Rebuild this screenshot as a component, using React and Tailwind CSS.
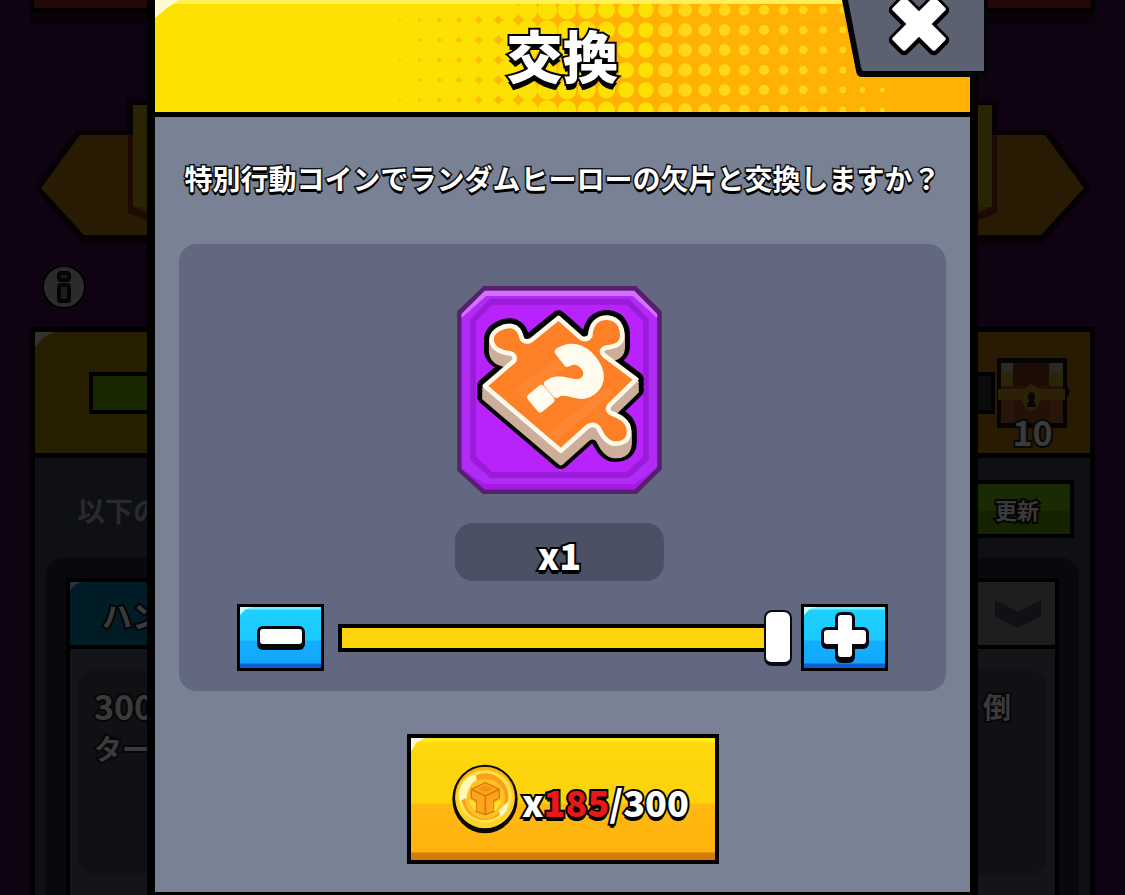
import React, { useState } from 'react';

const HEADER_ROWS = [10, 30, 50, 70, 90, 110];
const HEADER_COLS = Array.from({ length: 27 }, (_, i) => i);

const PIECE =
  'M355 142 L420 200 Q438 212 450 196 C452 160 472 140 503 141 C540 144 552 180 544 208 C536 228 512 228 494 232 Q478 240 492 254 L588 326 L510 402 Q498 414 510 426 C535 436 566 448 567 482 C566 514 542 522 516 518 C494 510 484 490 474 470 Q460 456 442 468 L362 540 L134 346 L222 270 Q228 254 210 248 C176 244 154 230 154 204 C156 180 190 164 214 166 C236 170 240 186 246 206 Q258 218 274 208 Z';

function Glint({ className }) {
  return <span aria-hidden="true" className={`absolute left-0 top-0 [clip-path:polygon(0_0,100%_0,45%_30%,0_100%)] ${className}`} />;
}

function HeaderPattern() {
  return (
    <svg className="absolute inset-0 h-full w-full" viewBox="0 0 815 112" preserveAspectRatio="xMidYMid slice" aria-hidden="true">
      <defs>
        <linearGradient id="header-base">
          <stop offset="0.26" stopColor="#f8cc04" />
          <stop offset="0.5" stopColor="#ffb204" />
        </linearGradient>
      </defs>
      <rect width="815" height="112" fill="url(#header-base)" />
      <rect width="216" height="112" fill="#fde102" />
      {HEADER_COLS.map((i) => {
        const cx = 215 + i * 19.7;
        const r = 13.7 - i * 0.43;
        return HEADER_ROWS.map((y) => <circle key={`${i}-${y}`} cx={cx} cy={y} r={r} fill={i > 14 ? '#ffd716' : '#fde102'} />);
      })}
      <rect width="815" height="4" fill="#fff05a" />
      <path d="M0 0 H24 L12 8 L0 18 Z" fill="#fffbd0" />
    </svg>
  );
}

function PuzzleTile() {
  return (
    <svg className="h-[210px] w-[207px]" viewBox="48 43 620 630" role="img" aria-label="ランダムヒーローの欠片">
      <path d="M130 46 H588 L665 122 V596 L590 670 H128 L51 600 V122 Z" fill="#57206f" />
      <path d="M134 60 H582 L651 130 V590 L584 656 H134 L64 594 V130 Z" fill="#b12af5" />
      <path d="M134 60 H582 L651 130 V142 L578 76 H138 L64 142 V130 Z" fill="#d56ffc" />
      <path d="M64 594 L134 640 H584 L651 590 L584 656 H134 Z" fill="#a41be6" />
      <path d="M150 84 H566 L626 146 V568 L566 622 H150 L90 568 V146 Z" fill="#9a1bd8" />
      <path d="M156 102 H560 L609 152 V558 L560 604 H156 L107 558 V152 Z" fill="#b822fb" />
      <g stroke="#000" strokeWidth="46" strokeLinejoin="round">
        <path d={PIECE} />
        <path d={PIECE} transform="translate(0 16)" />
        <path d={PIECE} transform="translate(0 32)" />
      </g>
      <g fill="#cdae9b" stroke="#cdae9b" strokeWidth="16" strokeLinejoin="round">
        <path d={PIECE} transform="translate(0 36)" />
        <path d={PIECE} transform="translate(0 28)" />
        <path d={PIECE} transform="translate(0 20)" />
        <path d={PIECE} transform="translate(0 10)" />
      </g>
      <path d={PIECE} fill="#fd7f26" stroke="#fff9ea" strokeWidth="14" strokeLinejoin="round" />
      <path d="M222 356 L406 222 L436 246 L250 388 Z" fill="#ff9040" opacity="0.4" />
      <path d="M320 490 L500 350 L520 366 L346 510 Z" fill="#ff9040" opacity="0.5" />
      <text
        x="372"
        y="440"
        textAnchor="middle"
        transform="rotate(50 372 334)"
        fill="#fffbef"
        stroke="#fffbef"
        strokeWidth="22"
        strokeLinejoin="round"
        className="font-['Liberation_Sans',sans-serif] text-[310px] font-bold"
      >
        ?
      </text>
    </svg>
  );
}

function Coin() {
  return (
    <svg className="h-[70px] w-[66px] shrink-0" viewBox="184 138 198 210" aria-hidden="true">
      <ellipse cx="283" cy="243" rx="98" ry="103" fill="#0b0905" />
      <ellipse cx="283" cy="238" rx="90" ry="92" fill="#f8b414" />
      <ellipse cx="283" cy="243" rx="88" ry="88" fill="#fdd02a" />
      <ellipse cx="283" cy="236" rx="80" ry="78" fill="#ffe44a" />
      <circle cx="283" cy="236" r="70" fill="#fb9d1d" />
      <circle cx="283" cy="242" r="60" fill="#ffc222" />
      <path d="M205 232 C206 200 226 176 256 170 L258 186 C240 196 230 216 228 240 L206 250 Z" fill="#fff9b5" />
      <path d="M354 248 C352 272 342 288 328 294 L326 276 Z" fill="#fffbd0" />
      <path d="M242 214 L284 194 L326 214 V240 L310 248 V280 L284 290 L256 280 V248 L242 240 Z" fill="#ffa51c" stroke="#d9780e" strokeWidth="4" strokeLinejoin="round" />
      <path d="M242 214 L284 234 L326 214 M284 234 V288" fill="none" stroke="#d9780e" strokeWidth="5" />
      <path d="M262 212 L284 202 L306 212 L284 222 Z" fill="#f58e16" />
      <path d="M236 246 L256 254 V280 Q240 268 236 246 M332 246 L310 254 V280 Q328 268 332 246" fill="#ffe22e" />
    </svg>
  );
}

function RibbonEnd({ className }) {
  return (
    <svg className={`h-[146px] w-[130px] ${className}`} viewBox="0 0 130 146" aria-hidden="true">
      <path d="M0 91 L42 33 H92 V2 H130 V146 H48 Z" fill="#050105" />
      <path d="M7 91 L46 38 H130 V138 H50 Z" fill="#271b04" />
      <path d="M94 38 H100 V110 L130 124 V130 L94 116 Z" fill="#1c0a03" />
      <path d="M99 8 H130 V110 H99 Z" fill="#2a2404" />
    </svg>
  );
}

function Chest() {
  return (
    <svg className="h-[70px] w-[75px]" viewBox="0 0 75 70" aria-hidden="true">
      <path d="M2 0 H72 V28 L75 34 L72 40 V70 H2 Z" fill="#050403" />
      <rect x="6" y="5" width="62" height="60" fill="#231006" />
      <path d="M18 5 H54 V28 H18 Z" fill="#1d0b05" />
      <path d="M6 5 H18 V28 H6 Z M54 5 H68 V28 H54 Z" fill="#2a2508" />
      <path d="M7 5 H18 V14 H7 Z M55 5 H67 V14 H55 Z" fill="#2a2a24" />
      <path d="M3 31 H28 L36 26 L44 31 H70 V42 H46 L42 50 L36 54 L30 50 L26 42 H3 Z" fill="#2b2106" />
      <path d="M36 34 a5 5 0 0 1 3 8 l2 7 h-9 l2 -7 a5 5 0 0 1 2 -8" fill="#080504" />
      <path d="M6 42 H20 V65 H6 Z M54 42 H68 V65 H54 Z" fill="#27150a" />
    </svg>
  );
}

// Dimmed mission screen behind the dialog
function MissionScreen() {
  return (
    <div className="flex h-full flex-col px-[30px] text-[#3a3a3a]">
      <div className="h-3 shrink-0 border-x-4 border-b-4 border-black bg-[#240805] shadow-[0_12px_0_#090209]" />
      <div className="mt-[85px] flex shrink-0 justify-between px-1">
        <RibbonEnd className="" />
        <RibbonEnd className="-scale-x-100" />
      </div>
      <button type="button" aria-label="情報" className="ml-3 mt-[22px] flex h-[44px] w-[44px] shrink-0 items-center justify-center rounded-full border-2 border-black bg-[#2b2b2b]">
        <svg viewBox="0 0 16 34" className="h-[34px] w-4" aria-hidden="true">
          <rect x="3" y="3" width="10" height="7" rx="2" fill="#1a1a1a" stroke="#050505" strokeWidth="4" />
          <rect x="3" y="15" width="10" height="16" rx="2" fill="#1d1d1d" stroke="#050505" strokeWidth="4" />
        </svg>
      </button>

      <section className="mt-[18px] flex flex-1 flex-col border-x-[5px] border-t-[5px] border-black bg-[#0e1013]">
        <div className="relative flex h-[126px] shrink-0 items-center border-b-[5px] border-black bg-linear-to-r from-[#271f02] to-[#291a02] pl-[54px] pr-5">
          <Glint className="h-4 w-5 bg-[#34322a]" />
          <div className="flex h-[42px] flex-1 border-4 border-black bg-[#0a0c0c]">
            <div className="w-3/4 bg-[#182602]" />
          </div>
          <div className="relative">
            <Chest />
            <span className="absolute inset-x-0 top-[60px] text-center text-[34px] leading-7 font-bold [-webkit-text-stroke:4px_#080808] [paint-order:stroke_fill]">10</span>
          </div>
        </div>

        <div className="flex items-start justify-between pl-[42px] pr-4 pt-[22px]">
          <p className="pt-3 text-[28px] leading-9 font-bold text-[#292a2b]">以下の</p>
          <button type="button" className="h-[58px] w-[190px] border-4 border-black bg-[linear-gradient(#1a2a02_55%,#152302_55%)] pl-[76px] text-[22px] font-bold">
            <span className="[-webkit-text-stroke:4px_#050505] [paint-order:stroke_fill]">更新</span>
          </button>
        </div>

        <div className="mx-[11px] mt-[20px] flex flex-1 flex-col rounded-t-[18px] bg-[#07090c] px-5 pt-5">
          <article className="flex flex-1 flex-col border-x-4 border-t-4 border-black bg-[#141518]">
            <div className="relative flex h-[67px] shrink-0 border-b-4 border-black bg-[#021c26]">
              <Glint className="h-2 w-3 bg-[#263338]" />
              <h2 className="flex-1 pl-8 pt-1 text-[30px] leading-[56px] font-bold [-webkit-text-stroke:4px_#050505] [paint-order:stroke_fill]">ハン</h2>
              <button type="button" aria-label="詳細を閉じる" className="flex w-[90px] items-center justify-center bg-[#1e1e1e] pl-4">
                <svg viewBox="0 0 46 28" className="h-7 w-[46px]" aria-hidden="true">
                  <path d="M0 0 L23 12 L46 0 V16 L23 28 L0 16 Z" fill="#0f1114" />
                </svg>
              </button>
            </div>
            <div className="mx-2 mb-5 mt-5 flex flex-1 justify-between rounded-[20px] bg-[#101114] pl-4 pr-9 pt-4 text-[28px] leading-[42px] font-bold [&_p]:[-webkit-text-stroke:4px_#070709] [&_p]:[paint-order:stroke_fill]">
              <p>
                <span className="block text-[34px]">300</span>
                ター
              </p>
              <p>倒</p>
            </div>
          </article>
        </div>
      </section>
    </div>
  );
}

const stepButton =
  'relative flex h-[67px] w-[87px] shrink-0 items-center justify-center border-[3px] border-black bg-[linear-gradient(#74f3ff_2px,#1fd0ff_3px,#1bc9ff_33px,#14aeff_34px,#12a8ff_56px,#0b5fd2_57px)]';

export default function App() {
  const [count, setCount] = useState(1);
  const [open, setOpen] = useState(true);

  return (
    <main className="relative h-screen overflow-hidden bg-[#0f0213] font-['Noto_Sans_CJK_JP',sans-serif]">
      <MissionScreen />

      {open && (
        <div className="absolute inset-0 flex justify-center">
          <div role="dialog" aria-labelledby="exchange-title" className="relative h-fit w-full max-w-[831px] border-x-8 border-b-8 border-black bg-[#798195]">
            <header className="relative flex h-[117px] justify-center border-b-[5px] border-black">
              <HeaderPattern />
              <h1 id="exchange-title" className="relative pt-3 text-[56px] leading-[84px] font-black text-white [-webkit-text-stroke:4px_#000] [paint-order:stroke_fill] [text-shadow:0_3px_0_#000,0_6px_0_#000]">
                交換
              </h1>
            </header>

            <button type="button" aria-label="閉じる" onClick={() => setOpen(false)} className="absolute -right-[18px] top-0">
              <svg viewBox="0 0 146 78" className="h-[78px] w-[146px]" aria-hidden="true">
                <path d="M0 0 H146 V77 H20 Q15 77 14 71 Z" fill="#040507" />
                <path d="M6 0 H142 V71 H21 Q20 71 19 67 Z" fill="#5b6170" />
                <g fill="#000" stroke="#000" strokeWidth="7" strokeLinejoin="round">
                  <rect x="47" y="16" width="60" height="18" rx="2" transform="rotate(45 77 25)" />
                  <rect x="47" y="16" width="60" height="18" rx="2" transform="rotate(-45 77 25)" />
                </g>
                <g fill="#fff">
                  <rect x="47" y="15" width="60" height="18" rx="2" transform="rotate(45 77 24)" />
                  <rect x="47" y="15" width="60" height="18" rx="2" transform="rotate(-45 77 24)" />
                </g>
              </svg>
            </button>

            <div className="flex flex-col items-center px-6 pb-7">
              <p className="mt-[41px] text-center text-[28px] leading-10 font-bold text-white [-webkit-text-stroke:3px_#111] [paint-order:stroke_fill] [text-shadow:0_3px_0_#000]">
                特別行動コインでランダムヒーローの欠片と交換しますか？
              </p>

              <section className="mt-[46px] flex w-full flex-col items-center rounded-[18px] bg-[#626880] px-[58px] pb-5 pt-[41px]">
                <div className="flex flex-col items-center pr-1.5">
                  <PuzzleTile />
                  <output htmlFor="exchange-count" className="mt-7 flex h-[58px] w-[209px] items-center justify-center rounded-[18px] bg-[#4b5064] pt-1 text-[36px] leading-10 font-black text-white [-webkit-text-stroke:4px_#000] [paint-order:stroke_fill] [text-shadow:0_4px_0_#000]">
                    x{count}
                  </output>
                </div>

                <div className="mt-[23px] flex w-full items-center">
                  <button type="button" aria-label="減らす" onClick={() => setCount(Math.max(0, count - 1))} className={stepButton}>
                    <Glint className="h-2 w-3 bg-[#c8fff5]" />
                    <svg viewBox="0 0 48 24" className="h-6 w-12" aria-hidden="true">
                      <rect width="48" height="24" rx="6" fill="#05070a" />
                      <rect x="3" y="3" width="42" height="15" rx="3" fill="#fff" />
                    </svg>
                  </button>
                  <input
                    id="exchange-count"
                    type="range"
                    aria-label="交換数"
                    min="0"
                    max="1"
                    value={count}
                    onChange={(e) => setCount(Number(e.target.value))}
                    className="ml-[14px] mr-[9px] h-14 min-w-0 flex-1 appearance-none bg-transparent [&::-webkit-slider-runnable-track]:h-7 [&::-webkit-slider-runnable-track]:bg-[#fdd40c] [&::-webkit-slider-runnable-track]:shadow-[inset_0_0_0_4px_#000] [&::-webkit-slider-thumb]:-mt-[14px] [&::-webkit-slider-thumb]:h-14 [&::-webkit-slider-thumb]:w-7 [&::-webkit-slider-thumb]:appearance-none [&::-webkit-slider-thumb]:rounded-[8px] [&::-webkit-slider-thumb]:border-2 [&::-webkit-slider-thumb]:border-b-4 [&::-webkit-slider-thumb]:border-[#0a0c12] [&::-webkit-slider-thumb]:bg-white"
                  />
                  <button type="button" aria-label="増やす" onClick={() => setCount(Math.min(1, count + 1))} className={stepButton}>
                    <Glint className="h-2 w-3 bg-[#c8fff5]" />
                    <svg viewBox="0 0 48 52" className="h-[52px] w-12" aria-hidden="true">
                      <g fill="#05070a">
                        <rect x="14" y="0" width="20" height="51" rx="6" />
                        <rect x="0" y="15" width="48" height="22" rx="6" />
                      </g>
                      <g fill="#fff">
                        <rect x="17" y="3" width="14" height="42" rx="3" />
                        <rect x="3" y="18" width="42" height="14" rx="3" />
                      </g>
                    </svg>
                  </button>
                </div>
              </section>

              <button
                type="button"
                className="relative mt-[43px] flex h-[130px] w-[312px] items-center justify-center border-4 border-black bg-[linear-gradient(#ffe91f_4px,#fed70c_5px,#fdd30c_65px,#ffb910_66px,#ffb20f_114px,#d67a0a_115px)] pl-4"
              >
                <Glint className="h-[14px] w-[14px] bg-[#fffbe0]" />
                <Coin />
                <span className="ml-1 pt-1 text-[36px] leading-10 font-black text-white [-webkit-text-stroke:4px_#000] [paint-order:stroke_fill] [text-shadow:0_4px_0_#000]">
                  x<span className="text-[#e91717]">185</span>/300
                </span>
              </button>
            </div>
          </div>
        </div>
      )}
    </main>
  );
}
